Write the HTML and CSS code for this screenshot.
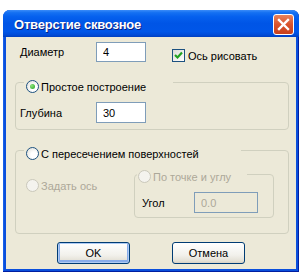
FILE: index.html
```html
<!DOCTYPE html>
<html lang="ru">
<head>
    <meta charset="UTF-8">
    <title>Отверстие сквозное</title>
    <link rel="stylesheet" href="styles.css">
</head>
<body>
    <div class="window">
        <div class="titlebar">
            <span class="title">Отверстие сквозное</span>
            <button class="close" aria-label="Закрыть">
                <svg width="13" height="13" viewBox="0 0 13 13">
                    <path d="M2 2 L11 11 M11 2 L2 11" stroke="#fff" stroke-width="2.4" stroke-linecap="square"/>
                </svg>
            </button>
        </div>

        <div class="content">
            <div class="top-row">
                <span class="label">Диаметр</span>
                <input class="edit" type="text" value="4">
                <label class="check">
                    <span class="box">
                        <svg width="11" height="11" viewBox="0 0 11 11">
                            <path d="M2 5 L4.5 7.5 L9 2.5" fill="none" stroke="#21a121" stroke-width="2.2"/>
                        </svg>
                    </span>
                    Ось рисовать
                </label>
            </div>

            <div class="group group-simple">
                <div class="legend legend-simple">
                    <span class="radio checked"></span>
                    <span>Простое построение</span>
                </div>
                <div class="field-row">
                    <span class="label">Глубина</span>
                    <input class="edit" type="text" value="30">
                </div>
            </div>

            <div class="group group-cross">
                <div class="legend legend-cross">
                    <span class="radio"></span>
                    <span>С пересечением поверхностей</span>
                </div>
                <div class="cross-row">
                    <div class="option disabled">
                        <span class="radio"></span>
                        <span>Задать ось</span>
                    </div>
                    <div class="group group-inner">
                        <div class="legend legend-inner disabled">
                            <span class="radio"></span>
                            <span>По точке и углу</span>
                        </div>
                        <div class="angle-row">
                            <span class="label">Угол</span>
                            <input class="edit edit-angle" type="text" value="0.0" disabled>
                        </div>
                    </div>
                </div>
            </div>

            <div class="buttons">
                <button class="btn default">OK</button>
                <button class="btn">Отмена</button>
            </div>
        </div>
    </div>
</body>
</html>
```

FILE: styles.css
```css
:root {
    --face: #ece9d8;
    --frame: #d0d0bf;
    --edge: #7f9db9;
    --ctl: #1c5180;
    --dim: #aca899;
}

* {
    margin: 0;
    padding: 0;
    box-sizing: border-box;
}

body {
    background: #fff;
    font-family: "Liberation Sans", Arial, sans-serif;
    font-size: 11px;
    color: #000;
}

.window {
    margin: 10px 0 0 3px;
    width: 296px;
    height: 262px;
    background: #0a4fdc;
    border-radius: 7px 7px 0 0;
    padding: 0 3px 3px 3px;
    box-shadow: inset -1px -1px 0 #001ea0, inset 1px 0 0 #1660ea;
}

.titlebar {
    height: 27px;
    margin: 0 -3px;
    padding: 2px 0 0 11px;
    border-radius: 7px 7px 0 0;
    background: linear-gradient(#3b8cf8 0%, #1470f2 10%, #0560ee 25%, #0055e6 50%, #0056e8 80%, #004bd8 92%, #003fbf 100%);
    display: flex;
    align-items: center;
}

.title {
    flex: 1;
    color: #fff;
    font-weight: bold;
    font-size: 13px;
    letter-spacing: -0.2px;
    text-shadow: 1px 1px 0 #0a1f80;
}

.close {
    width: 21px;
    height: 21px;
    margin: 0 5px 0 0;
    border: 1px solid #fff;
    border-radius: 3px;
    background: linear-gradient(#e8835d, #d9532c 50%, #c8401c);
    display: flex;
    align-items: center;
    justify-content: center;
}

.content {
    height: 232px;
    background: var(--face);
    padding-top: 5px;
}

.label {
    display: inline-block;
    width: 76px;
}

.edit {
    width: 50px;
    height: 20px;
    border: 1px solid var(--edge);
    background: #fff;
    padding: 0 6px;
    font: inherit;
    color: #000;
    outline: none;
}

.top-row {
    display: flex;
    align-items: center;
    margin-left: 14px;
    height: 20px;
}

.check {
    display: flex;
    align-items: center;
    gap: 3px;
    margin: 7px 0 0 26px;
}

.box {
    width: 13px;
    height: 13px;
    border: 1px solid var(--ctl);
    background: linear-gradient(135deg, #dcdcd7, #fff);
    display: flex;
    align-items: center;
    justify-content: center;
}

.group {
    border: 1px solid var(--frame);
    border-radius: 4px;
}

.legend {
    display: flex;
    align-items: center;
    gap: 2px;
    height: 13px;
    background: var(--face);
    padding-left: 2px;
}

.radio {
    width: 13px;
    height: 13px;
    border: 1px solid var(--ctl);
    border-radius: 50%;
    background: radial-gradient(circle at 65% 65%, #fff 30%, #dcdcd5);
    display: flex;
    align-items: center;
    justify-content: center;
}

.radio.checked::after {
    content: "";
    width: 5px;
    height: 5px;
    border-radius: 50%;
    background: radial-gradient(circle at 35% 35%, #8ee47a, #21a121);
}

.disabled {
    color: var(--dim);
}

.disabled .radio {
    border-color: #cac8bb;
    background: #f4f3ee;
}

.group-simple {
    margin: 20px 0 0 9px;
    width: 274px;
    height: 48px;
}

.legend-simple {
    width: 149px;
    margin: -3px 0 0 8px;
}

.field-row {
    display: flex;
    align-items: center;
    margin: 9px 0 0 4px;
}

.field-row .edit {
    height: 21px;
}

.group-cross {
    margin: 20px 0 0 9px;
    width: 274px;
    height: 84px;
}

.legend-cross {
    width: 217px;
    margin: -4px 0 0 8px;
}

.cross-row {
    display: flex;
    margin-top: 14px;
}

.option {
    display: flex;
    align-items: center;
    gap: 2px;
    margin: 5px 0 0 10px;
    width: 108px;
    height: 13px;
}

.group-inner {
    width: 140px;
    height: 44px;
}

.legend-inner {
    width: 110px;
    margin: -5px 0 0 2px;
    padding-left: 1px;
}

.angle-row {
    display: flex;
    align-items: center;
    margin: 9px 0 0 7px;
}

.angle-row .label {
    width: 52px;
}

.edit-angle {
    width: 64px;
    height: 21px;
    background: var(--face);
    color: var(--dim);
}

.buttons {
    display: flex;
    gap: 42px;
    margin: 8px 0 0 51px;
}

.btn {
    width: 73px;
    height: 22px;
    border: 1px solid #003c74;
    border-radius: 3px;
    background: linear-gradient(#ffffff, #f2f1ec 60%, #e3e0d5 90%, #d6d0c5);
    font: inherit;
    color: #000;
}

.btn.default {
    box-shadow: inset 0 0 0 1px #aecbf4, inset 0 -1px 0 2px #87acea;
}
```
